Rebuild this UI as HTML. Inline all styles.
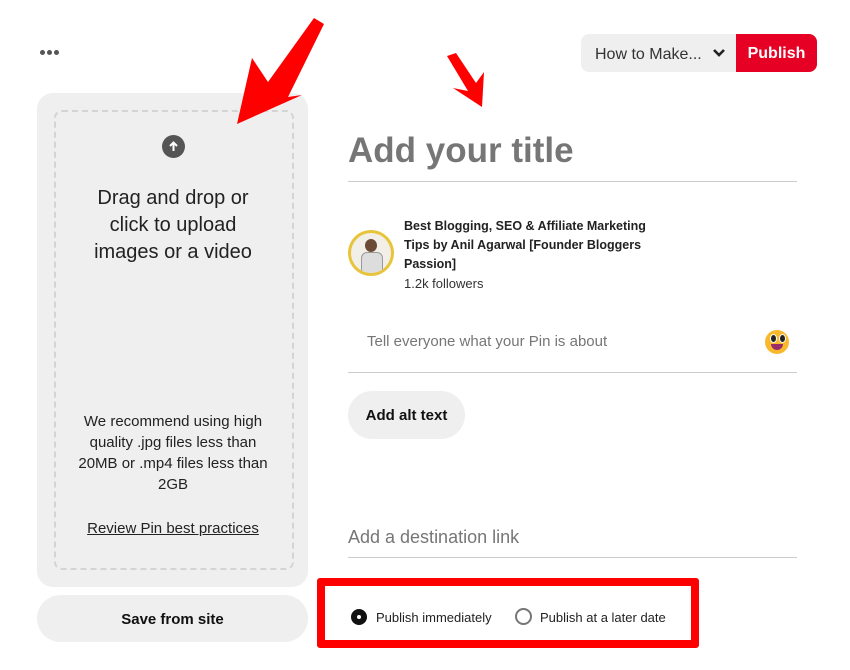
<!DOCTYPE html>
<html><head><meta charset="utf-8"><style>
body{margin:0;width:850px;height:670px;background:#fff;font-family:"Liberation Sans",sans-serif;position:relative;overflow:hidden;color:#111}
.a{position:absolute}
.d{position:absolute;top:50px;width:5px;height:5px;border-radius:50%;background:#555}
</style></head><body>
<div class="d" style="left:40px"></div><div class="d" style="left:47px"></div><div class="d" style="left:54px"></div>
<div class="a" style="left:581px;top:34px;width:236px;height:38px;border-radius:8px;background:#efefef;overflow:hidden">
 <div class="a" style="left:14px;top:12px;font-size:16px;color:#333">How to Make...</div>
 <svg class="a" style="left:131px;top:13px" width="14" height="12" viewBox="0 0 14 12"><path d="M2 3l5 5 5-5" stroke="#222" stroke-width="2.6" fill="none"/></svg>
 <div class="a" style="left:155px;top:0;width:81px;height:38px;background:#e60023;color:#fff;font-weight:bold;font-size:16px;line-height:40px;text-align:center">Publish</div>
</div>
<div class="a" style="left:37px;top:93px;width:271px;height:494px;background:#efefef;border-radius:16px"></div>
<div class="a" style="left:54px;top:110px;width:236px;height:456px;border:2px dashed #d4d4d4;border-radius:8px"></div>
<div class="a" style="left:162px;top:135px;width:23px;height:23px;border-radius:50%;background:#555"></div>
<svg class="a" style="left:162px;top:135px" width="23" height="23"><path d="M11.5 16V8M8 11l3.5-3.5L15 11" stroke="#fff" stroke-width="2" fill="none"/></svg>
<div class="a" style="left:78px;top:185px;width:190px;text-align:center;font-size:20px;line-height:27px;color:#222">Drag and drop or click to upload images or a video</div>
<div class="a" style="left:73px;top:411px;width:200px;text-align:center;font-size:15px;line-height:21px;color:#222">We recommend using high quality .jpg files less than 20MB or .mp4 files less than 2GB</div>
<div class="a" style="left:56px;top:520px;width:234px;text-align:center;font-size:15px;color:#222;text-decoration:underline">Review Pin best practices</div>
<div class="a" style="left:37px;top:595px;width:271px;height:47px;border-radius:24px;background:#efefef;text-align:center;line-height:50px;font-weight:bold;font-size:15px">Save from site</div>
<div class="a" style="left:348px;top:131px;font-size:35px;font-weight:bold;color:#767676">Add your title</div>
<div class="a" style="left:348px;top:181px;width:449px;height:1px;background:#ccc"></div>
<div class="a" style="left:348px;top:230px;width:46px;height:46px;border-radius:50%;background:#e8c43a"></div>
<div class="a" style="left:351px;top:233px;width:40px;height:40px;border-radius:50%;background:#f2efe8;overflow:hidden"><div class="a" style="left:14px;top:6px;width:12px;height:13px;border-radius:50%;background:#6b4a36"></div><div class="a" style="left:10px;top:19px;width:20px;height:22px;border-radius:6px;background:#ddd;border:1px solid #999"></div></div>
<div class="a" style="left:404px;top:217px;font-size:12.5px;font-weight:bold;line-height:19px;color:#222;width:262px">Best Blogging, SEO &amp; Affiliate Marketing Tips by Anil Agarwal [Founder Bloggers Passion]</div>
<div class="a" style="left:404px;top:276px;font-size:13px;color:#333">1.2k followers</div>
<div class="a" style="left:367px;top:333px;font-size:15px;color:#767676">Tell everyone what your Pin is about</div>
<div class="a" style="left:765px;top:330px;width:24px;height:24px;border-radius:50%;background:#f8b92d"></div>
<div class="a" style="left:770px;top:334px;width:5px;height:7px;border-radius:50%;background:#222;border:1px solid #fff"></div>
<div class="a" style="left:779px;top:334px;width:5px;height:7px;border-radius:50%;background:#222;border:1px solid #fff"></div>
<div class="a" style="left:771px;top:344px;width:12px;height:6px;border-radius:0 0 6px 6px;background:#9a2a6a"></div>
<div class="a" style="left:348px;top:372px;width:449px;height:1px;background:#ccc"></div>
<div class="a" style="left:348px;top:391px;width:117px;height:48px;border-radius:24px;background:#efefef;font-weight:bold;font-size:15px;line-height:50px;text-align:center">Add alt text</div>
<div class="a" style="left:348px;top:527px;font-size:18px;color:#767676">Add a destination link</div>
<div class="a" style="left:348px;top:557px;width:449px;height:1px;background:#ccc"></div>
<div class="a" style="left:317px;top:578px;width:366px;height:54px;border:8px solid #f00;border-radius:3px"></div>
<div class="a" style="left:351px;top:609px;width:16px;height:16px;border-radius:50%;background:#111"></div>
<div class="a" style="left:357px;top:615px;width:4px;height:4px;border-radius:50%;background:#fff"></div>
<div class="a" style="left:376px;top:610px;font-size:13px;color:#222">Publish immediately</div>
<div class="a" style="left:515px;top:608px;width:13px;height:13px;border-radius:50%;border:2px solid #767676"></div>
<div class="a" style="left:540px;top:610px;font-size:13px;color:#222">Publish at a later date</div>
<svg class="a" style="left:0;top:0" width="850" height="670">
<polygon points="314,18 324,24 288,97 302,95 237,124 252,58 268,82" fill="#f00"/>
<polygon points="447,56 456,53 476,83 484,72 482,107 453,88 468,91" fill="#f00"/>
</svg>
</body></html>
